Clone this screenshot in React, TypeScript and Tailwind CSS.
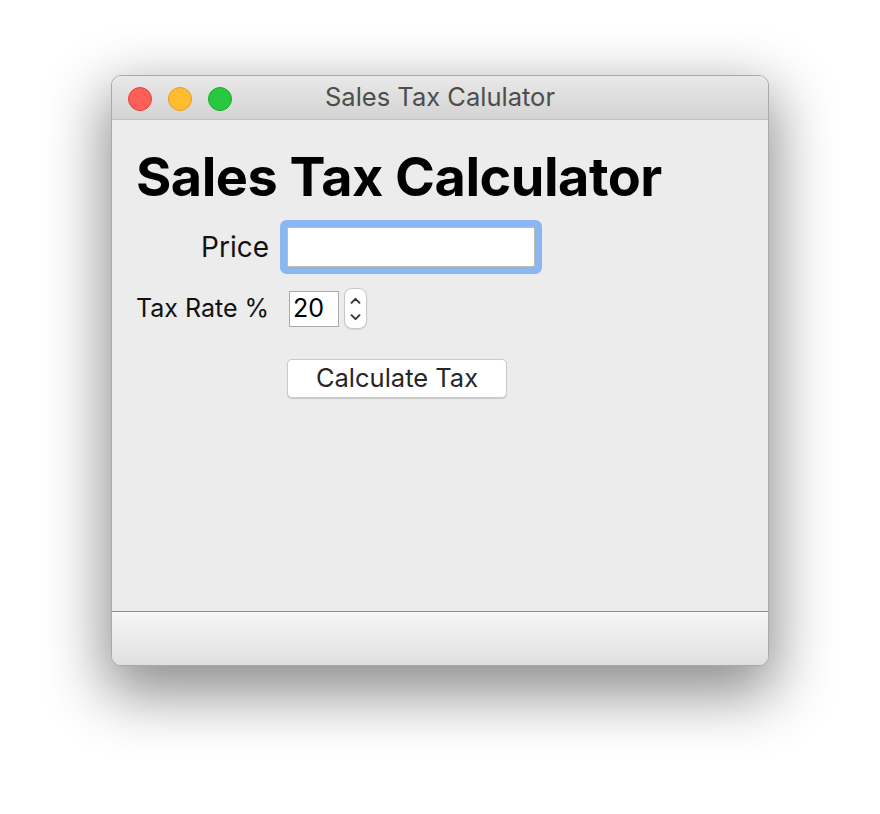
const font = { fontFamily: 'Inter, "Noto Sans", "Liberation Sans", sans-serif' };

const TrafficLights = () => (
    <div className="absolute left-[16px] top-[11px] flex gap-[16px]">
        <span className="block h-[24px] w-[24px] rounded-full border border-[#e0443e] bg-[#ff5f57]" />
        <span className="block h-[24px] w-[24px] rounded-full border border-[#dea123] bg-[#febc2e]" />
        <span className="block h-[24px] w-[24px] rounded-full border border-[#1aab29] bg-[#28c840]" />
    </div>
);

const Stepper = () => (
    <div className="flex h-[41px] w-[23px] flex-col items-center justify-center gap-[10px] rounded-[8px] border border-[#c8c8c8] bg-white shadow-[0_1px_1px_rgba(0,0,0,0.08)]">
        <svg width="11" height="7" viewBox="0 0 11 7" fill="none">
            <path d="M1.5 5.8 L5.5 1.8 L9.5 5.8" stroke="#333" strokeWidth="1.9" strokeLinecap="round" strokeLinejoin="round" />
        </svg>
        <svg width="11" height="7" viewBox="0 0 11 7" fill="none">
            <path d="M1.5 1.2 L5.5 5.2 L9.5 1.2" stroke="#333" strokeWidth="1.9" strokeLinecap="round" strokeLinejoin="round" />
        </svg>
    </div>
);

function App() {
    return (
        <div className="min-h-[814px] bg-white pt-[75px]" style={font}>
            <div className="ml-[111px] flex h-[591px] w-[658px] flex-col overflow-hidden rounded-[10px] border border-[#a9a9a9] bg-[#ececec] shadow-[0_22px_60px_6px_rgba(0,0,0,0.45)]">
                {/* title bar */}
                <div className="relative flex h-[44px] shrink-0 items-center justify-center border-b border-[#c2c2c2] bg-gradient-to-b from-[#e9e9e9] to-[#d3d3d3]">
                    <TrafficLights />
                    <span className="text-[25.5px] text-[#4d4d4d]">Sales Tax Calulator</span>
                </div>

                {/* content */}
                <div className="flex-1 px-[24px] pt-[27px]">
                    <h1 className="text-[54px] font-bold leading-[60px] tracking-[-0.5px] text-black">
                        Sales Tax Calculator
                    </h1>
                    <div className="mt-[20px] grid grid-cols-[133px_1fr] items-center gap-x-[18px]">
                        <span className="text-right text-[28px] leading-[40px] text-[#111]">Price</span>
                        <input
                            className="h-[40px] w-[248px] rounded-[2px] border border-[#bdbab3] bg-white px-2 text-[24px] outline-none ring-[7px] ring-[#8cb6f0]"
                            defaultValue=""
                        />

                        <span className="mt-[21px] whitespace-nowrap text-right text-[25px] leading-[41px] text-[#111]">Tax Rate %</span>
                        <div className="ml-[2px] mt-[21px] flex items-center gap-[5px]">
                            <div className="flex h-[36px] w-[50px] items-center border border-[#ababab] bg-white pl-[3px] text-[25px] text-black">
                                20
                            </div>
                            <Stepper />
                        </div>

                        <span />
                        <button className="mt-[30px] flex h-[39px] w-[220px] items-center justify-center rounded-[5px] border border-[#cacaca] bg-white text-[25.5px] text-[#262626] shadow-[0_1px_1px_rgba(0,0,0,0.15)]">
                            Calculate Tax
                        </button>
                    </div>
                </div>

                {/* bottom bar */}
                <div className="h-[54px] shrink-0 border-t border-[#8c8c8c] bg-gradient-to-b from-[#f6f6f6] to-[#e0e0e0]" />
            </div>
        </div>
    );
}

export default App;
